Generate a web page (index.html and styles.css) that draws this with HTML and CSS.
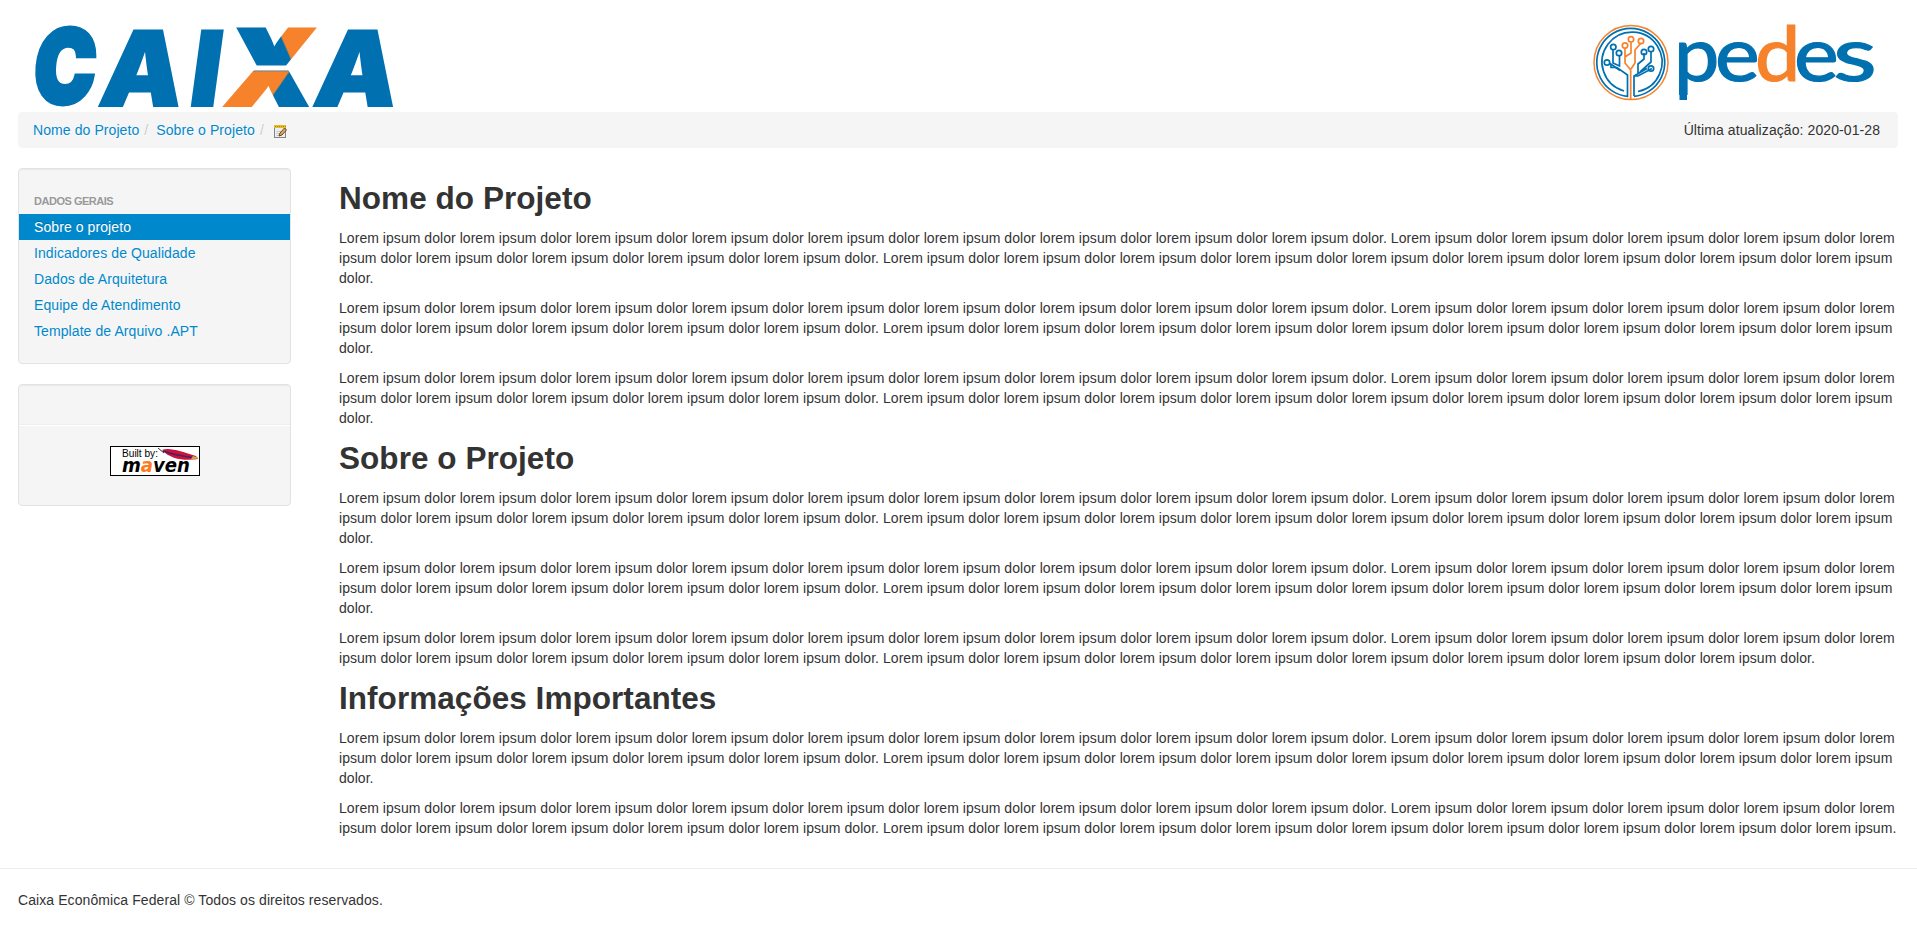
FILE: index.html
```html
<!DOCTYPE html>
<html lang="pt-BR">
<head>
<meta charset="utf-8">
<title>Sobre o Projeto</title>
<link rel="stylesheet" href="styles.css">
</head>
<body>
<div class="container">
  <header class="banner">
    <svg class="logo-caixa" width="376" height="112" viewBox="18 0 376 112" role="img" aria-label="CAIXA">
      <defs>
        <pattern id="ribbon" patternUnits="userSpaceOnUse" x="0" y="0" width="400" height="112">
          <rect width="400" height="112" fill="#0070b0"/>
          <path d="M262 20H340V65H288Z" fill="#f6832b"/>
          <path d="M210 112V71H285L262 112Z" fill="#f6832b"/>
        </pattern>
      </defs>
      <g class="caixa-letters">
        <text transform="translate(31.500 103) skewX(-5) scale(.79 .98)" stroke-width="5">C</text>
        <text transform="translate(97 106) skewX(-7.7)">A</text>
        <text transform="translate(187 106) skewX(-7.7)">I</text>
        <text transform="translate(311.500 106) skewX(-7.7)">A</text>
      </g>
      <g fill="url(#ribbon)" stroke="url(#ribbon)"><text class="caixa-x" x="224" y="105.500" textLength="84" lengthAdjust="spacingAndGlyphs">X</text></g>
      <rect x="250" y="65.500" width="50" height="5" fill="#fff"/>
    </svg>
    <svg class="logo-pedes" width="300" height="112" viewBox="1590 0 300 112" role="img" aria-label="pedes">
      <g fill="none" stroke="#0070b0" stroke-width="1.700">
        <circle cx="1631" cy="62.500" r="37" stroke="#f6832b" stroke-width="1.500"/>
        <path d="M1634 96.300A34 34 0 1 0 1627.500 96.300V75L1617 67.500H1611V64"/>
        <path d="M1624 91A30 30 0 1 1 1638 91.500"/>
        <path d="M1634 96V76L1647 68.500M1610 63.500L1620 70.500M1613 50V63L1619.500 66V56M1634 76H1638L1652 68.500M1644 53V59L1638 64V74M1651 52V62L1640 72"/>
        <path stroke="#f6832b" d="M1630.700 99V70L1625 63V48M1631 42V53L1625 57M1641 43L1635 50V63L1631 69"/>
        <circle cx="1607" cy="62.500" r="2.700"/><circle cx="1613.300" cy="47" r="2.700"/><circle cx="1619" cy="53" r="2.700"/>
        <circle cx="1644" cy="52" r="2.700"/><circle cx="1651" cy="49" r="2.700"/><circle cx="1651" cy="68.500" r="2.700"/>
        <g stroke="#f6832b"><circle cx="1625" cy="45.500" r="2.700"/><circle cx="1631" cy="39.300" r="2.700"/><circle cx="1641" cy="41" r="2.700"/></g>
      </g>
      <g class="pedes-letters">
        <text transform="translate(1674 81) scale(1.08 1)">p</text>
        <text transform="translate(1715 81) scale(1.13 1)">e</text>
        <text transform="translate(1755 81) scale(1.08 1)" class="orange">d</text>
        <text transform="translate(1794 81) scale(1.13 1)">e</text>
        <text transform="translate(1833 81) scale(1.35 1)">s</text>
      </g>
      <rect x="1679.500" y="88" width="7.500" height="12" fill="#0070b0"/>
    </svg>
  </header>

  <nav class="breadcrumb">
    <ul>
      <li><a href="#">Nome do Projeto</a><span class="divider">/</span></li>
      <li><a href="#">Sobre o Projeto</a><span class="divider">/</span></li>
      <li><a href="#" class="edit" aria-label="Editar"><svg width="14" height="14" viewBox="0 0 14 14">
        <rect x=".5" y="1.500" width="11" height="11" fill="#eee" stroke="#858585"/>
        <path d="M2.500 6.500H9M2.500 8.500H8M2.500 10.500H7" stroke="#c4c4c4"/>
        <rect y="0" width="12" height="3" fill="#e6bd25"/><path d="M1 1.500H12" stroke="#a48425" stroke-dasharray="1 1"/>
        <path d="M5 11L6 8L10.500 3L12.500 5L8 10Z" fill="#d9a95a" stroke="#6b4a24"/>
      </svg></a></li>
    </ul>
    <span>Última atualização: 2020-01-28</span>
  </nav>

  <div class="columns">
    <aside>
      <div class="well">
        <ul class="nav-list">
          <li class="nav-header">Dados Gerais</li>
          <li><a class="active" href="#">Sobre o projeto</a></li>
          <li><a href="#">Indicadores de Qualidade</a></li>
          <li><a href="#">Dados de Arquitetura</a></li>
          <li><a href="#">Equipe de Atendimento</a></li>
          <li><a href="#">Template de Arquivo .APT</a></li>
        </ul>
      </div>
      <div class="well built">
        <hr>
        <svg width="90" height="30" viewBox="0 0 90 30" role="img" aria-label="Built by Maven">
          <rect x=".5" y=".5" width="89" height="29" fill="#fff" stroke="#000"/>
          <text class="built-by" x="12" y="10.500" textLength="36" lengthAdjust="spacingAndGlyphs">Built by:</text>
          <path d="M48 2L54 7" stroke="#333"/>
          <path d="M52 4C60 1 72 6 86 10L88 13C76 15 61 14 52 4Z" fill="#c8143c"/>
          <path d="M53 5C61 8 72 10 82 11.500" fill="none" stroke="#48205f" stroke-width="1.500"/>
          <path d="M83 10L88 11.500L86 13.500L81 13Z" fill="#c8a642"/>
          <text class="maven" x="12" y="26" textLength="68" lengthAdjust="spacingAndGlyphs">m<tspan fill="#ff7a1a">a</tspan>ven</text>
        </svg>
      </div>
    </aside>

    <main>
      <h2>Nome do Projeto</h2>
      <p>Lorem ipsum dolor lorem ipsum dolor lorem ipsum dolor lorem ipsum dolor lorem ipsum dolor lorem ipsum dolor lorem ipsum dolor lorem ipsum dolor lorem ipsum dolor. Lorem ipsum dolor lorem ipsum dolor lorem ipsum dolor lorem ipsum dolor lorem ipsum dolor lorem ipsum dolor lorem ipsum dolor lorem ipsum dolor lorem ipsum dolor. Lorem ipsum dolor lorem ipsum dolor lorem ipsum dolor lorem ipsum dolor lorem ipsum dolor lorem ipsum dolor lorem ipsum dolor lorem ipsum dolor lorem ipsum dolor.</p>
      <p>Lorem ipsum dolor lorem ipsum dolor lorem ipsum dolor lorem ipsum dolor lorem ipsum dolor lorem ipsum dolor lorem ipsum dolor lorem ipsum dolor lorem ipsum dolor. Lorem ipsum dolor lorem ipsum dolor lorem ipsum dolor lorem ipsum dolor lorem ipsum dolor lorem ipsum dolor lorem ipsum dolor lorem ipsum dolor lorem ipsum dolor. Lorem ipsum dolor lorem ipsum dolor lorem ipsum dolor lorem ipsum dolor lorem ipsum dolor lorem ipsum dolor lorem ipsum dolor lorem ipsum dolor lorem ipsum dolor.</p>
      <p>Lorem ipsum dolor lorem ipsum dolor lorem ipsum dolor lorem ipsum dolor lorem ipsum dolor lorem ipsum dolor lorem ipsum dolor lorem ipsum dolor lorem ipsum dolor. Lorem ipsum dolor lorem ipsum dolor lorem ipsum dolor lorem ipsum dolor lorem ipsum dolor lorem ipsum dolor lorem ipsum dolor lorem ipsum dolor lorem ipsum dolor. Lorem ipsum dolor lorem ipsum dolor lorem ipsum dolor lorem ipsum dolor lorem ipsum dolor lorem ipsum dolor lorem ipsum dolor lorem ipsum dolor lorem ipsum dolor.</p>
      <h2>Sobre o Projeto</h2>
      <p>Lorem ipsum dolor lorem ipsum dolor lorem ipsum dolor lorem ipsum dolor lorem ipsum dolor lorem ipsum dolor lorem ipsum dolor lorem ipsum dolor lorem ipsum dolor. Lorem ipsum dolor lorem ipsum dolor lorem ipsum dolor lorem ipsum dolor lorem ipsum dolor lorem ipsum dolor lorem ipsum dolor lorem ipsum dolor lorem ipsum dolor. Lorem ipsum dolor lorem ipsum dolor lorem ipsum dolor lorem ipsum dolor lorem ipsum dolor lorem ipsum dolor lorem ipsum dolor lorem ipsum dolor lorem ipsum dolor.</p>
      <p>Lorem ipsum dolor lorem ipsum dolor lorem ipsum dolor lorem ipsum dolor lorem ipsum dolor lorem ipsum dolor lorem ipsum dolor lorem ipsum dolor lorem ipsum dolor. Lorem ipsum dolor lorem ipsum dolor lorem ipsum dolor lorem ipsum dolor lorem ipsum dolor lorem ipsum dolor lorem ipsum dolor lorem ipsum dolor lorem ipsum dolor. Lorem ipsum dolor lorem ipsum dolor lorem ipsum dolor lorem ipsum dolor lorem ipsum dolor lorem ipsum dolor lorem ipsum dolor lorem ipsum dolor lorem ipsum dolor.</p>
      <p>Lorem ipsum dolor lorem ipsum dolor lorem ipsum dolor lorem ipsum dolor lorem ipsum dolor lorem ipsum dolor lorem ipsum dolor lorem ipsum dolor lorem ipsum dolor. Lorem ipsum dolor lorem ipsum dolor lorem ipsum dolor lorem ipsum dolor lorem ipsum dolor lorem ipsum dolor lorem ipsum dolor lorem ipsum dolor lorem ipsum dolor. Lorem ipsum dolor lorem ipsum dolor lorem ipsum dolor lorem ipsum dolor lorem ipsum dolor lorem ipsum dolor lorem ipsum dolor lorem ipsum dolor.</p>
      <h2>Informações Importantes</h2>
      <p>Lorem ipsum dolor lorem ipsum dolor lorem ipsum dolor lorem ipsum dolor lorem ipsum dolor lorem ipsum dolor lorem ipsum dolor lorem ipsum dolor lorem ipsum dolor. Lorem ipsum dolor lorem ipsum dolor lorem ipsum dolor lorem ipsum dolor lorem ipsum dolor lorem ipsum dolor lorem ipsum dolor lorem ipsum dolor lorem ipsum dolor. Lorem ipsum dolor lorem ipsum dolor lorem ipsum dolor lorem ipsum dolor lorem ipsum dolor lorem ipsum dolor lorem ipsum dolor lorem ipsum dolor lorem ipsum dolor.</p>
      <p>Lorem ipsum dolor lorem ipsum dolor lorem ipsum dolor lorem ipsum dolor lorem ipsum dolor lorem ipsum dolor lorem ipsum dolor lorem ipsum dolor lorem ipsum dolor. Lorem ipsum dolor lorem ipsum dolor lorem ipsum dolor lorem ipsum dolor lorem ipsum dolor lorem ipsum dolor lorem ipsum dolor lorem ipsum dolor lorem ipsum dolor. Lorem ipsum dolor lorem ipsum dolor lorem ipsum dolor lorem ipsum dolor lorem ipsum dolor lorem ipsum dolor lorem ipsum dolor lorem ipsum dolor lorem ipsum.</p>
    </main>
  </div>
</div>
<hr class="footer-rule">
<footer>Caixa Econômica Federal © Todos os direitos reservados.</footer>
</body>
</html>
```

FILE: styles.css
```css
body {
  margin: 0;
  background: #fff;
  color: #333;
  font: 14px/20px "Liberation Sans", Arial, sans-serif;
  letter-spacing: .085px;
}

a { color: #0088cc; text-decoration: none; }
ul { list-style: none; margin: 0; padding: 0; }
svg { overflow: visible; letter-spacing: 0; }
.container { padding: 0 19px 0 18px; }

.banner {
  display: flex;
  justify-content: space-between;
  height: 112px;
}

.logo-pedes { margin-right: 8px; }
.caixa-letters { fill: #0070b0; stroke: #0070b0; stroke-width: 2; }
.caixa-letters text, .caixa-x { font: 900 104px Inter, sans-serif; }
.caixa-x {
  stroke-width: 4;
  transform: skewX(-7.7deg);
  transform-origin: 223px 106px;
}
.pedes-letters { font: 400 75px Lato, sans-serif; fill: #0070b0; stroke: #0070b0; stroke-width: 1.2; }
.pedes-letters .orange { fill: #f6832b; stroke: #f6832b; }

.breadcrumb {
  display: flex;
  justify-content: space-between;
  height: 20px;
  padding: 8px 18px 8px 15px;
  margin-bottom: 20px;
  background: #f5f5f5;
  border-radius: 4px;
}

.breadcrumb ul { display: flex; }
.breadcrumb li { text-shadow: 0 1px 0 #fff; }
.divider { padding: 0 8px 0 5px; color: #ccc; }
.edit svg { display: block; margin: 5px 0 0 2px; }

.columns { display: flex; gap: 48px; }
aside { flex: 0 0 273px; }
main { flex: 1; padding-top: 10px; letter-spacing: .047px; }

.well {
  box-sizing: border-box;
  padding: 19px 0;
  margin-bottom: 20px;
  background: #f5f5f5;
  border: 1px solid #e3e3e3;
  border-radius: 4px;
  box-shadow: inset 0 1px 1px rgba(0, 0, 0, .05);
}

.nav-list a, .nav-header { display: block; padding: 3px 15px; text-shadow: 0 1px 0 rgba(255, 255, 255, .5); }
.nav-header { color: #999; font-size: 11px; font-weight: bold; letter-spacing: -.48px; text-transform: uppercase; }
.nav-list .active { background: #0088cc; color: #fff; text-shadow: 0 -1px 0 rgba(0, 0, 0, .2); }

.built { height: 122px; padding-top: 39px; }
.built hr { height: 0; margin: 0 0 20px; border: 0; border-top: 1px solid #eee; border-bottom: 1px solid #fff; }
.built svg { display: block; margin: 0 auto; }
.built-by { font: 10.5px "Liberation Sans", Arial, sans-serif; }
.maven { font: italic bold 20px "DejaVu Sans", sans-serif; }

h2 { margin: 0 0 10px; font-size: 31.5px; line-height: 40px; }
p { margin: 0 0 10px; }

.footer-rule { margin: 20px 0; border: 0; border-top: 1px solid #eee; border-bottom: 1px solid #fff; }
footer { padding: 0 18px; }
```
